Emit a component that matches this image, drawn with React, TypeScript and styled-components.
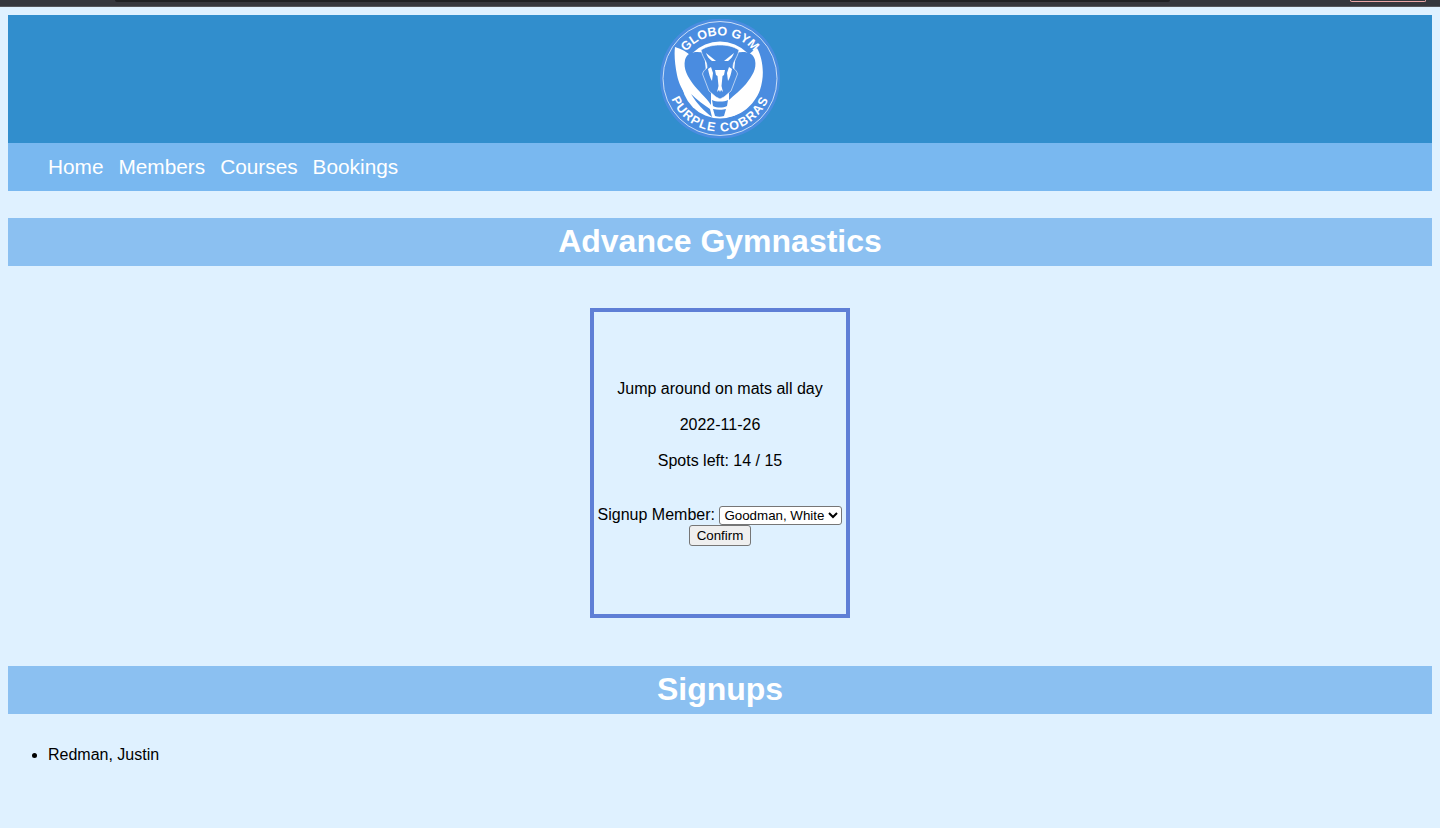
import React from 'react'
import styled, { createGlobalStyle } from 'styled-components'

const GlobalStyle = createGlobalStyle`
    html, body {
        margin: 0;
        padding: 0;
        background: #dff1ff;
        font-family: "Liberation Sans", Arial, sans-serif;
        color: #000;
    }
`

const BrowserEdge = styled.div`
    height: 6px;
    background: #36373d;
    border-bottom: 1px solid #55565b;
    display: flex;
    justify-content: space-between;
    padding: 0 14px 0 115px;
`

const AddressBar = styled.div`
    width: 1055px;
    height: 2px;
    background: #202124;
    border-radius: 0 0 8px 8px;
`

const ProfilePill = styled.div`
    box-sizing: border-box;
    width: 76px;
    height: 2px;
    border: 1px solid #eba6a6;
    border-top: none;
    border-radius: 0 0 5px 5px;
`

const Page = styled.div`
    padding: 8px 8px 0;
    height: 821px;
    box-sizing: border-box;
    overflow: hidden;
`

const Header = styled.header`
    height: 128px;
    background: #318ecd;
    display: flex;
    align-items: center;
    justify-content: center;
`

const Nav = styled.nav`
    height: 48px;
    background: #79b8f0;
    display: flex;
    align-items: center;
    gap: 15px;
    padding-left: 40px;
`

const NavLink = styled.a`
    color: #fff;
    font-size: 20.8px;
    text-decoration: none;
`

const Banner = styled.h1<{ $top: number }>`
    margin: ${p => p.$top}px 0 0;
    height: 48px;
    line-height: 46px;
    background: #8bc0f1;
    color: #fff;
    font-size: 32px;
    font-weight: 700;
    text-align: center;
`

const Card = styled.section`
    box-sizing: border-box;
    width: 260px;
    height: 310px;
    margin: 42px auto 48px;
    border: 4px solid #5f7fd6;
    padding: 68px 0 0;
    text-align: center;
    font-size: 16px;
`

const CardLine = styled.p`
    margin: 0 0 18px;
    line-height: 18px;
`

const SignupForm = styled.form`
    margin-top: 35px;
    line-height: 20px;
`

const MemberSelect = styled.select`
    font-family: "Liberation Sans", Arial, sans-serif;
    font-size: 13.33px;
    height: 19px;
    width: 123px;
    background: #fff;
    border: 1px solid #767676;
    border-radius: 3px;
    padding: 0;
`

const ConfirmButton = styled.button`
    display: block;
    margin: 0 auto;
    font-family: "Liberation Sans", Arial, sans-serif;
    font-size: 13.33px;
    height: 21px;
    width: 62px;
    padding: 0;
    background: #efefef;
    border: 1px solid #767676;
    border-radius: 3px;
    color: #000;
`

const SignupList = styled.ul`
    margin: 32px 0 0;
    padding-left: 40px;
    font-size: 16px;
    line-height: 18px;
`

const LogoBlue = '#4a8ce0'

const Logo = () => (
    <svg width="120" height="120" viewBox="0 0 120 120" style={{ display: 'block' }}>
        <defs>
            <path id="arc-top" d="M 16.5 60 A 43.5 43.5 0 0 1 103.5 60" />
            <path id="arc-bottom" d="M 7.5 60 A 52.5 52.5 0 0 0 112.5 60" />
        </defs>
        <circle cx="60" cy="59.5" r="60" fill={LogoBlue} />
        <circle cx="60" cy="59.5" r="57" fill="none" stroke="#fff" strokeWidth="0.7" />
        {/* white disc with the coil's shoulders */}
        <circle cx="60" cy="61" r="38.5" fill="#fff" />
        <path d="M15 28 C22 30 27 33 31 37 L88 37 C91 33 94 31 97 29 C103 40 105 56 100 71 C94 87 80 97 68 98 L52 98 C34 90 20 72 17 56 C15 46 14 36 15 28 Z" fill="#fff" />
        {/* hood crescents */}
        <path d="M44 34 C36 32 27 33 25 41 C23 50 28 58 33 65 C38 72 46 78 51 86 L51 70 L46 52 Z" fill={LogoBlue} />
        <path d="M76 34 C84 32 93 33 95 41 C97 50 92 57 86 65 C81 71 74 76 69 81 L69 70 L74 52 Z" fill={LogoBlue} />
        {/* lower neck shadow */}
        <path d="M31 75 C37 85 44 92 52 98 L50 90 C44 86 37 81 31 75 Z" fill={LogoBlue} />
        {/* head */}
        <path d="M41 31 C47 27 54 26 60 26 C66 26 73 27 79 31 C78 36 76 39 74.5 42 C73 45 73 47 73 49 C76 51 77 53 77.5 55 L71 72 L64 78 L60 80 L56 78 L49 72 L42.5 55 C43 53 44 51 47 49 C47 47 47 45 45.5 42 C44 39 42 36 41 31 Z" fill={LogoBlue} stroke="#fff" strokeWidth="0.6" />
        {/* eyes */}
        <path d="M46 34 L56 42 L52 42 C49 40 47 37 46 34 Z M74 34 L64 42 L68 42 C71 40 73 37 74 34 Z" fill="#fff" />
        {/* fangs and mouth */}
        <path d="M48 50 L51 48 L53 54 L52 62 C50 59 49 55 48 50 Z M72 50 L69 48 L67 54 L68 62 C70 59 71 55 72 50 Z" fill="#fff" />
        <path d="M55 51 L65 51 L64 56 L62.5 57 L61.5 67 L63 73 L61 71 L60 73 L59 71 L57 73 L58.5 67 L57.5 57 L56 56 Z" fill="#fff" />
        {/* neck bands */}
        <path d="M52 81 C56 83 64 83 68 81 L67 87 C63 89 57 89 53 87 Z" fill={LogoBlue} />
        <path d="M53 90 C57 91 63 91 66 90 L64 97 C61 98 58 98 55 97 Z" fill={LogoBlue} />
        <text fontFamily='"Liberation Sans", Arial, sans-serif' fontSize="12.5" fontWeight="700" fill="#fff" textAnchor="middle">
            <textPath href="#arc-top" startOffset="50%">GLOBO GYM</textPath>
        </text>
        <text fontFamily='"Liberation Sans", Arial, sans-serif' fontSize="12.5" fontWeight="700" fill="#fff" textAnchor="middle" letterSpacing="1.2">
            <textPath href="#arc-bottom" startOffset="50%">PURPLE COBRAS</textPath>
        </text>
    </svg>
)

const navItems = ['Home', 'Members', 'Courses', 'Bookings']

const App: React.FC = () => (
    <>
        <GlobalStyle />
        <BrowserEdge>
            <AddressBar />
            <ProfilePill />
        </BrowserEdge>
        <Page>
            <Header>
                <Logo />
            </Header>
            <Nav>
                {navItems.map(item => <NavLink key={item} href="#">{item}</NavLink>)}
            </Nav>
            <Banner $top={27}>Advance Gymnastics</Banner>
            <Card>
                <CardLine>Jump around on mats all day</CardLine>
                <CardLine>2022-11-26</CardLine>
                <CardLine>Spots left: 14 / 15</CardLine>
                <SignupForm>
                    Signup Member:{' '}
                    <MemberSelect defaultValue="Goodman, White">
                        <option>Goodman, White</option>
                    </MemberSelect>
                    <ConfirmButton type="button">Confirm</ConfirmButton>
                </SignupForm>
            </Card>
            <Banner $top={0}>Signups</Banner>
            <SignupList>
                <li>Redman, Justin</li>
            </SignupList>
        </Page>
    </>
)

export default App
